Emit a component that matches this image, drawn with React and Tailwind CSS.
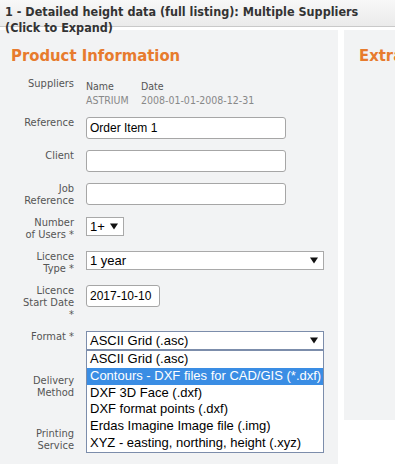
const LBL = "font-['DejaVu_Sans_Condensed','DejaVu_Sans',sans-serif]";
const ARIAL = "font-['Liberation_Sans',Arial,sans-serif]";

function Arrow() {
  return (
    <svg width="8" height="7" viewBox="0 0 8 7" className="shrink-0">
      <polygon points="0,0.5 8,0.5 4,6.5" fill="#111" />
    </svg>
  );
}

function Select({ value, w, focused }) {
  return (
    <div
      className={`h-[19px] ${w} border ${focused ? "border-[#7c8dab]" : "border-[#a9a9a9]"} bg-white flex items-center justify-between pl-[3px] pr-[5px] text-[13px] leading-[17px] text-black ${ARIAL}`}
    >
      <span className="whitespace-nowrap">{value}</span>
      <Arrow />
    </div>
  );
}

function Input({ value, w }) {
  return (
    <div
      className={`h-[22px] ${w} border border-[#a6a6a6] rounded-[3px] bg-white flex items-center pl-[3px] text-[12px] text-black ${ARIAL}`}
    >
      {value}
    </div>
  );
}

function Row({ h, label, children }) {
  return (
    <div className={`flex ${h}`}>
      <div className={`w-[74px] shrink-0 text-right text-[11px] leading-[12px] text-[#555] ${LBL}`}>
        {label}
      </div>
      <div className="ml-[12px] relative">{children}</div>
    </div>
  );
}

const options = [
  "ASCII Grid (.asc)",
  "Contours - DXF files for CAD/GIS (*.dxf)",
  "DXF 3D Face (.dxf)",
  "DXF format points (.dxf)",
  "Erdas Imagine Image file (.img)",
  "XYZ - easting, northing, height (.xyz)",
];

export default function App() {
  return (
    <div className="w-[395px] h-[464px] overflow-hidden bg-white relative">
      <div
        className={`relative z-20 h-[27px] border-b border-[#c9c9c9] bg-gradient-to-b from-[#f8f8f8] to-[#ebebeb] pl-[5px] pt-[4px] text-[12.5px] font-bold leading-[16px] text-[#333] ${LBL}`}
      >
        1 - Detailed height data (full listing): Multiple Suppliers (Click to Expand)
      </div>
      <div className="mt-[3px] flex gap-[6px] items-start">
        <div className="w-[338px] h-[434px] shrink-0 bg-[#f2f3f4] pt-[16px]">
          <div className={`pl-[11px] text-[16.5px] leading-[20px] font-bold text-[#e77b2e] ${LBL}`}>
            Product Information
          </div>
          <div className="mt-[12px]">
            <Row h="h-[39px]" label="Suppliers">
              <div className={`pt-[1px] flex text-[10.5px] leading-[14px] ${LBL}`}>
                <div className="w-[55px]">
                  <div className="text-[#555]">Name</div>
                  <div className="text-[#888]">ASTRIUM</div>
                </div>
                <div>
                  <div className="text-[#555]">Date</div>
                  <div className="text-[#888]">2008-01-01-2008-12-31</div>
                </div>
              </div>
            </Row>
            <Row h="h-[33px]" label="Reference">
              <Input value="Order Item 1" w="w-[200px]" />
            </Row>
            <Row h="h-[33px]" label="Client">
              <Input value="" w="w-[200px]" />
            </Row>
            <Row
              h="h-[34px]"
              label={
                <>
                  Job
                  <br />
                  Reference
                </>
              }
            >
              <Input value="" w="w-[200px]" />
            </Row>
            <Row
              h="h-[34px]"
              label={
                <>
                  Number
                  <br />
                  of Users *
                </>
              }
            >
              <Select value="1+" w="w-[38px]" />
            </Row>
            <Row
              h="h-[34px]"
              label={
                <>
                  Licence
                  <br />
                  Type *
                </>
              }
            >
              <Select value="1 year" w="w-[238px]" />
            </Row>
            <Row
              h="h-[46px]"
              label={
                <>
                  Licence
                  <br />
                  Start Date
                  <br />*
                </>
              }
            >
              <Input value="2017-10-10" w="w-[74px]" />
            </Row>
            <Row h="h-[44px]" label="Format *">
              <Select value="ASCII Grid (.asc)" w="w-[238px]" focused />
              <div
                className={`absolute left-0 top-[19px] w-[238px] border border-[#7c8dab] bg-white z-10 text-[13px] text-black ${ARIAL}`}
              >
                {options.map((o, i) => (
                  <div
                    key={o}
                    className={`h-[16.8px] leading-[16.8px] pl-[3px] whitespace-nowrap ${
                      i === 1 ? "bg-[#3a8de4] text-white" : ""
                    }`}
                  >
                    {o}
                  </div>
                ))}
              </div>
            </Row>
            <Row
              h="h-[53px]"
              label={
                <>
                  Delivery
                  <br />
                  Method
                </>
              }
            >
              <div />
            </Row>
            <Row
              h="h-[30px]"
              label={
                <>
                  Printing
                  <br />
                  Service
                </>
              }
            >
              <div />
            </Row>
          </div>
        </div>
        <div className="flex-1 min-w-0 h-[390px] bg-[#f2f3f4] pt-[16px] overflow-hidden">
          <div className={`pl-[15px] text-[16.5px] leading-[20px] font-bold text-[#e77b2e] whitespace-nowrap ${LBL}`}>
            Extra Information
          </div>
        </div>
      </div>
    </div>
  );
}
